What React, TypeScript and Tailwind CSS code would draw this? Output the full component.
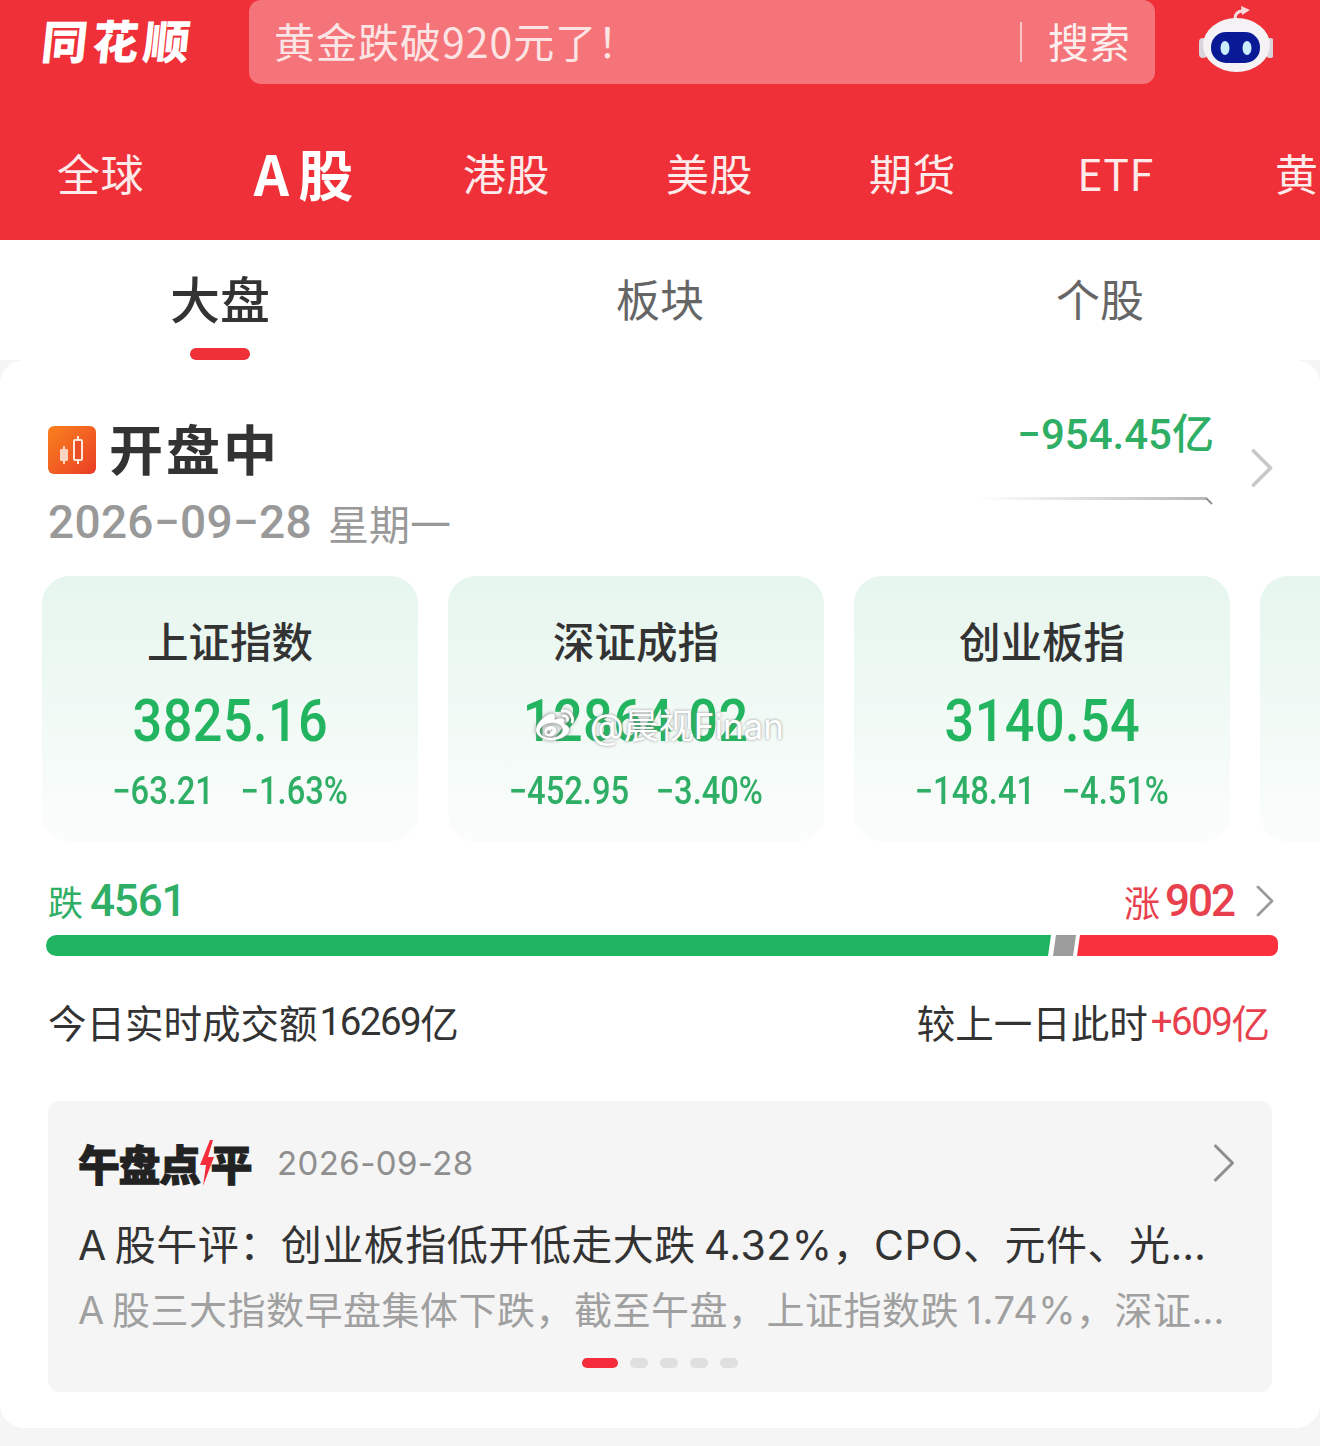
import { ChevronRight } from 'lucide-react'
import { FaWeibo } from 'react-icons/fa'

const CJK = "font-['Noto_Sans_CJK_SC','Noto_Sans',sans-serif]"
const NUM = "font-['Roboto','Noto_Sans_CJK_SC',sans-serif]"

const MARKETS = ['全球', 'A股', '港股', '美股', '期货', 'ETF', '黄金']

const INDEXES = [
  { name: '上证指数', value: '3825.16', diff: '−63.21', pct: '−1.63%' },
  { name: '深证成指', value: '12864.02', diff: '−452.95', pct: '−3.40%' },
  { name: '创业板指', value: '3140.54', diff: '−148.41', pct: '−4.51%' },
]

function Robot() {
  return (
    <svg width="76" height="72" viewBox="0 0 76 72" className="shrink-0">
      <path d="M38 13 C38 7 41 5 46 5" fill="none" stroke="#f6dcdc" strokeWidth="3" strokeLinecap="round" />
      <path d="M44 0 L53 4 L45 9 Z" fill="#f6dcdc" />
      <rect x="2" y="32" width="8" height="20" rx="4" fill="#d9d4dc" />
      <rect x="69" y="32" width="8" height="20" rx="4" fill="#d9d4dc" />
      <ellipse cx="39.5" cy="39" rx="33.5" ry="27" fill="#f5f2f6" />
      <rect x="14" y="26" width="49" height="31" rx="15" fill="#0a1a96" />
      <ellipse cx="28" cy="42" rx="4.5" ry="7" fill="#c9eeff" />
      <ellipse cx="50" cy="42" rx="4.5" ry="7" fill="#c9eeff" />
    </svg>
  )
}

function CandleIcon() {
  return (
    <div className="flex h-[48px] w-[48px] shrink-0 translate-y-[2px] items-center justify-center rounded-md bg-gradient-to-br from-[#f9801e] to-[#ea3a24]">
      <svg width="28" height="32" viewBox="0 0 28 32">
        <path d="M6 12v18" stroke="#fbd5c4" strokeWidth="2" />
        <rect x="2" y="15" width="8" height="12" rx="1" fill="#fbd5c4" />
        <path d="M20 2v28" stroke="#fde6da" strokeWidth="2" />
        <rect x="16" y="6" width="8" height="20" rx="1" fill="#ea4f26" stroke="#fde6da" strokeWidth="2" />
      </svg>
    </div>
  )
}

function IndexCard({ name, value, diff, pct }: { name: string; value: string; diff: string; pct: string }) {
  return (
    <div className="flex h-[266px] w-[376px] shrink-0 flex-col items-center rounded-[28px] bg-gradient-to-b from-[#e6f6ee] to-[#fbfdfc] pt-[35px]">
      <div className={`${CJK} text-[41.5px] leading-[58px] font-medium text-[#333]`}>{name}</div>
      <div className={`${NUM} mt-[18px] scale-x-[0.87] text-[60px] leading-[68px] font-medium tracking-[0.5px] text-[#22b45f]`}>{value}</div>
      <div className={`${NUM} mt-[14px] flex scale-x-[0.86] gap-[31px] text-[38px] leading-[44px] font-medium text-[#2fae66]`}>
        <span>{diff}</span>
        <span>{pct}</span>
      </div>
    </div>
  )
}

export default function App() {
  return (
    <div className={`${CJK} relative h-[1446px] w-[1320px] overflow-hidden bg-[#f5f5f5]`}>
      {/* Red header */}
      <div className="h-[240px] overflow-hidden bg-[#ef3038]">
        <div className="flex h-[84px] items-center pl-[42px] pr-[47px]">
          <div className="w-[207px] shrink-0 -translate-y-[3px] -skew-x-6 text-[46px] leading-[84px] font-black tracking-[5px] text-white">同花顺</div>
          <div className="flex h-[84px] w-[906px] items-center rounded-xl bg-[#f5747a] pl-[25px] pr-[25px]">
            <span className="flex-1 -translate-y-px text-[41px] tracking-[1px] text-[#fde4e4]">黄金跌破920元了！</span>
            <span className="mr-[26px] h-[40px] w-[2px] bg-[#fbc4c6]" />
            <span className="-translate-y-px text-[41px] text-[#fdeeee]">搜索</span>
          </div>
          <div className="ml-auto">
            <Robot />
          </div>
        </div>
        <div className="-ml-px flex h-[156px] items-start pt-[58px]">
          {MARKETS.map((m) => (
            <div
              key={m}
              className={
                m === 'A股'
                  ? 'flex h-[60px] w-[203px] shrink-0 items-center justify-center gap-[9px] text-[55px] font-semibold text-white'
                  : 'flex h-[60px] w-[203px] shrink-0 items-center justify-center text-[43px] tracking-[0.5px] text-[#fdeaea]'
              }
            >
              {m === 'A股' ? (
                <>
                  <span>A</span>
                  <span>股</span>
                </>
              ) : (
                m
              )}
            </div>
          ))}
        </div>
      </div>

      {/* Sub tabs */}
      <div className="grid h-[120px] grid-cols-3 bg-white">
        <div className="relative flex items-center justify-center pb-[6px] text-[50px] font-medium text-[#333]">
          大盘
          <span className="absolute bottom-0 left-[190px] h-[12px] w-[60px] rounded-full bg-[#ef3038]" />
        </div>
        <div className="flex items-center justify-center pb-[4px] text-[44px] text-[#666]">板块</div>
        <div className="flex items-center justify-center pb-[4px] text-[44px] text-[#666]">个股</div>
      </div>

      {/* Market card */}
      <div className="relative h-[1068px] overflow-hidden rounded-[24px] bg-white">
        <div className="flex h-[216px] items-start justify-between pl-[48px] pr-[48px] pt-[54px]">
          <div>
            <div className="flex h-[68px] items-center gap-[13px]">
              <CandleIcon />
              <span className="text-[54px] leading-[68px] font-semibold tracking-[3px] text-[#333]">开盘中</span>
            </div>
            <div className="mt-[12px] flex items-center gap-[16px]">
              <span className={`${NUM} text-[46px] leading-[56px] font-medium tracking-[0.3px] text-[#999]`}>2026−09−28</span>
              <span className="text-[41px] leading-[56px] text-[#999]">星期一</span>
            </div>
          </div>
          <div className="-mr-[24px] flex items-start">
            <div className="flex w-[244px] flex-col items-end">
              <span className={`${NUM} text-[42px] leading-[42px] font-medium text-[#2fae66]`}>−954.45亿</span>
              <svg width="244" height="14" viewBox="0 0 244 14" className="mt-[39px]">
                <defs>
                  <linearGradient id="spark" x1="0" x2="1" y1="0" y2="0">
                    <stop offset="0" stopColor="#ffffff" />
                    <stop offset="1" stopColor="#b8b8b8" />
                  </linearGradient>
                </defs>
                <rect x="8" y="2" width="228" height="3" fill="url(#spark)" />
                <path d="M236 3 L242 9" stroke="#8f8f8f" strokeWidth="2" />
              </svg>
            </div>
            <ChevronRight className="mt-[20px] ml-[14px] shrink-0" size={68} strokeWidth={1.3} color="#c9c9c9" />
          </div>
        </div>

        <div className="flex gap-[30px] pl-[42px]">
          {INDEXES.map((idx) => (
            <IndexCard key={idx.name} {...idx} />
          ))}
          <div className="h-[266px] w-[376px] shrink-0 rounded-[28px] bg-gradient-to-b from-[#e6f6ee] to-[#fbfdfc]" />
        </div>

        {/* Rise / fall bar */}
        <div className="mt-[34px] flex h-[50px] items-center pl-[48px] pr-[42px]">
          <span className="text-[35px] text-[#2fae66]">跌</span>
          <span className={`${NUM} ml-[7px] text-[44px] font-medium tracking-[-1.2px] text-[#2fae66]`}>4561</span>
          <span className="ml-auto text-[36px] text-[#e8404c]">涨</span>
          <span className={`${NUM} ml-[5px] text-[44px] font-medium tracking-[-2px] text-[#e8404c]`}>902</span>
          <ChevronRight className="ml-[3px] -mr-[15px] shrink-0" size={56} strokeWidth={1.2} color="#9a9a9a" />
        </div>
        <div className="mt-[9px] ml-[46px] flex h-[21px] w-[1232px]">
          <div className="flex-1 rounded-l-full bg-[#1fb45f] [clip-path:polygon(0_0,100%_0,calc(100%_-_3px)_100%,0_100%)]" />
          <div className="ml-[2px] w-[23px] bg-[#9c9c9c] [clip-path:polygon(3px_0,100%_0,calc(100%_-_3px)_100%,0_100%)]" />
          <div className="ml-[1px] w-[201px] rounded-r-lg bg-[#f9313f] [clip-path:polygon(3px_0,100%_0,100%_100%,0_100%)]" />
        </div>

        {/* Turnover */}
        <div className="mt-[41px] flex h-[50px] items-center justify-between pl-[48px] pr-[50px] text-[38.5px] text-[#333]">
          <span className="flex items-center">
            今日实时成交额<span className={`${NUM} ml-[2px] tracking-[-1.5px]`}>16269</span>亿
          </span>
          <span className="flex items-center">
            较上一日此时<span className={`${NUM} ml-[3px] tracking-[-1.5px] text-[#e8404c]`}>+609</span><span className="text-[#e8404c]">亿</span>
          </span>
        </div>

        {/* Midday review */}
        <div className="mx-[48px] mt-[54px] h-[291px] rounded-xl bg-[#f5f5f5] pl-[30px] pr-[24px] pt-[34px]">
          <div className="flex h-[56px] items-center">
            <div className="flex w-[199px] shrink-0 items-center text-[42px] leading-[56px] font-black tracking-[-1.5px] text-[#222] [-webkit-text-stroke:1px_#222]">
              午盘点
              <svg width="16" height="46" viewBox="0 0 16 46" className="-mx-[1px] shrink-0">
                <path d="M11 0 L1 25 H7 L4 46 L15 17 H9 L14 0 Z" fill="#f42c3c" />
              </svg>
              <span className="-ml-[3px]">平</span>
            </div>
            <span className="translate-y-px text-[33px] font-['Inter',sans-serif] tracking-[0.4px] text-[#8f8f8f]">2026-09-28</span>
            <ChevronRight className="ml-auto -mr-[10px] shrink-0" size={68} strokeWidth={1.1} color="#8f8f8f" />
          </div>
          <div className="mt-[25px] text-[41px] leading-[58px] font-['Inter','Noto_Sans_CJK_SC',sans-serif] tracking-[0.5px] whitespace-nowrap text-[#333]">
            A&#8201;股午评：创业板指低开低走大跌&#8201;4.32%，CPO、元件、光…
          </div>
          <div className="mt-[10px] text-[38px] leading-[52px] font-['Inter','Noto_Sans_CJK_SC',sans-serif] tracking-[0.5px] whitespace-nowrap text-[#a0a0a0]">
            A&#8201;股三大指数早盘集体下跌，截至午盘，上证指数跌&#8201;1.74%，深证…
          </div>
          <div className="mt-[22px] flex items-center justify-center gap-[12px] pr-[7px]">
            <span className="h-[10px] w-[36px] rounded-full bg-[#f42c3c]" />
            <span className="h-[10px] w-[18px] rounded-full bg-[#dfdfdf]" />
            <span className="h-[10px] w-[18px] rounded-full bg-[#dfdfdf]" />
            <span className="h-[10px] w-[18px] rounded-full bg-[#dfdfdf]" />
            <span className="h-[10px] w-[18px] rounded-full bg-[#dfdfdf]" />
          </div>
        </div>
      </div>

      {/* Watermark */}
      <div className="absolute left-[536px] top-[704px] flex h-[44px] items-center gap-[16px] text-[35px] font-['Inter','Noto_Sans_CJK_SC',sans-serif] text-white [text-shadow:0_0_3px_#8a8a8a]">
        <FaWeibo size={38} color="#ffffff" className="[filter:drop-shadow(0_0_2px_#777)]" />
        <span>@晨视Finan</span>
      </div>
    </div>
  )
}
